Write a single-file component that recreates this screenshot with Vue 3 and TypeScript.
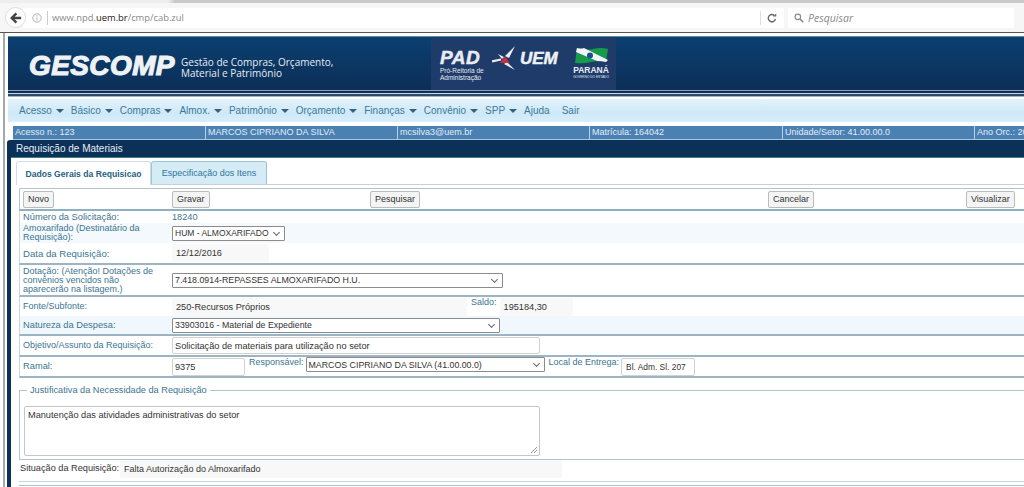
<script setup lang="ts">
const menus = [
  { label: 'Acesso', caret: true },
  { label: 'Básico', caret: true },
  { label: 'Compras', caret: true },
  { label: 'Almox.', caret: true },
  { label: 'Patrimônio', caret: true },
  { label: 'Orçamento', caret: true },
  { label: 'Finanças', caret: true },
  { label: 'Convênio', caret: true },
  { label: 'SPP', caret: true },
  { label: 'Ajuda', caret: false },
  { label: 'Sair', caret: false }
]

const infoCells = [
  { text: 'Acesso n.: 123', width: 193 },
  { text: 'MARCOS CIPRIANO DA SILVA', width: 192 },
  { text: 'mcsilva3@uem.br', width: 192 },
  { text: 'Matrícula: 164042', width: 193 },
  { text: 'Unidade/Setor: 41.00.00.0', width: 192 },
  { text: 'Ano Orc.: 2016', width: 60 }
]

const actions = ['Novo', 'Gravar', 'Pesquisar', 'Cancelar', 'Visualizar']
</script>

<template>
  <div class="page">
    <div class="browser">
      <div class="tabstrip"></div>
      <div class="navbar">
        <div class="back">
          <svg width="12" height="12" viewBox="0 0 14 14">
            <path d="M7.500 1.500 2 7l5.500 5.500M2.500 7H13" fill="none" stroke="#444" stroke-width="2.800" />
          </svg>
        </div>
        <div class="urlbar">
          <svg class="info-icon" width="10" height="10" viewBox="0 0 11 11">
            <circle cx="5.500" cy="5.500" r="4.600" fill="none" stroke="#aaa" />
            <path d="M5.500 4.800v3.400M5.500 2.600v1.200" stroke="#aaa" />
          </svg>
          <span class="url-sep"></span>
          <span class="url">www.npd.<b>uem.br</b>/cmp/cab.zul</span>
          <span class="reload-sep"></span>
          <svg class="reload" width="10" height="10" viewBox="0 0 11 11">
            <path d="M9.300 6.500A4 4 0 1 1 8 2.600" fill="none" stroke="#666" stroke-width="1.500" />
            <path d="M6.600 3.900h3.600V.6z" fill="#666" />
          </svg>
        </div>
        <div class="searchbar">
          <svg width="10" height="10" viewBox="0 0 13 13">
            <circle cx="5" cy="5" r="3.600" fill="none" stroke="#888" stroke-width="1.500" />
            <path d="m8 8 4 4" stroke="#888" stroke-width="2" />
          </svg>
          <span>Pesquisar</span>
        </div>
      </div>
    </div>

    <div class="viewport">
      <header class="banner">
        <div class="brand">GESCOMP</div>
        <div class="tagline">Gestão de Compras, Orçamento,<br />Material e Patrimônio</div>
        <div class="partners">
          <div class="pad">
            <div class="pad-name">PAD</div>
            <div class="pad-sub">Pró-Reitoria de<br />Administração</div>
          </div>
          <div class="uem">
            <svg width="25" height="26" viewBox="0 0 25 26">
              <path d="M0 15.500 9 13.500" stroke="#e8eef4" stroke-width="2.200" fill="none" />
              <path d="M13 10 23 0 17 12zM15 16l8 8-11-6zM6 8l6 3-2 2z" fill="#e8eef4" />
              <path d="M8 17 13 10l4.500 7z" fill="#c8303c" />
            </svg>
            <span>UEM</span>
          </div>
          <div class="parana">
            <svg width="33" height="17" viewBox="0 0 33 17">
              <path d="M2 1 Q10 4 18 2 T33 2 L31 15 Q24 13 16 15 T0 16z" fill="#169a4b" />
              <path d="M2 1 Q6 2 9 1 L33 13 L31 15 Q27 14 22 14 L1 5z" fill="#f2f4f6" />
              <circle cx="15" cy="8.500" r="3" fill="#1c4f8e" />
            </svg>
            <div class="parana-name">PARANÁ</div>
            <div class="parana-sub">GOVERNO DO ESTADO</div>
          </div>
        </div>
      </header>
      <div class="stripes"></div>

      <nav class="menu">
        <span v-for="item in menus" :key="item.label" class="menu-item">
          {{ item.label }}<i v-if="item.caret" class="caret"></i>
        </span>
      </nav>

      <div class="info-bar">
        <span
          v-for="cell in infoCells"
          :key="cell.text"
          class="info-cell"
          :style="{ width: cell.width + 'px' }"
        >{{ cell.text }}</span>
      </div>

      <section class="window">
        <div class="window-title">Requisição de Materiais</div>
        <div class="window-body">
          <div class="tabs">
            <div class="tab active">Dados Gerais da Requisicao</div>
            <div class="tab second">Especificação dos Itens</div>
          </div>

          <div class="form">
            <div class="toolbar">
              <div v-for="a in actions" :key="a"><button class="btn">{{ a }}</button></div>
            </div>

            <div class="group">
              <div class="row r-num">
                <label>Número da Solicitação:</label>
                <span class="value">18240</span>
              </div>
              <div class="row r-almox">
                <label class="tight">Amoxarifado (Destinatário da Requisição):</label>
                <div class="select almox">HUM - ALMOXARIFADO</div>
              </div>
              <div class="row r-data">
                <label>Data da Requisição:</label>
                <div class="readonly data">12/12/2016</div>
              </div>
            </div>

            <div class="group">
              <div class="row r-dot">
                <label class="tight dot-label">Dotação: (Atenção! Dotações de convênios vencidos não aparecerão na listagem.)</label>
                <div class="select dotacao">7.418.0914-REPASSES ALMOXARIFADO H.U.</div>
              </div>
            </div>

            <div class="group">
              <div class="row r-fonte">
                <label class="tight">Fonte/Subfonte:</label>
                <div class="readonly fonte">250-Recursos Próprios</div>
                <label class="inline saldo-label">Saldo:</label>
                <div class="readonly saldo">195184,30</div>
              </div>
              <div class="row r-nat">
                <label>Natureza da Despesa:</label>
                <div class="select natureza">33903016 - Material de Expediente</div>
              </div>
            </div>

            <div class="group">
              <div class="row r-obj">
                <label class="tight">Objetivo/Assunto da Requisição:</label>
                <div class="input objetivo">Solicitação de materiais para utilização no setor</div>
              </div>
            </div>

            <div class="group">
              <div class="row r-ramal">
                <label>Ramal:</label>
                <div class="input ramal">9375</div>
                <label class="inline resp-label">Responsável:</label>
                <div class="select responsavel">MARCOS CIPRIANO DA SILVA (41.00.00.0)</div>
                <label class="inline local-label">Local de Entrega:</label>
                <div class="input local">Bl. Adm. Sl. 207</div>
              </div>
            </div>

            <fieldset class="just">
              <legend>Justificativa da Necessidade da Requisição</legend>
              <div class="textarea">
                Manutenção das atividades administrativas do setor
                <svg class="grip" width="8" height="8" viewBox="0 0 8 8">
                  <path d="M7 1 1 7M7 4 4 7" stroke="#999" fill="none" />
                </svg>
              </div>
            </fieldset>

            <div class="situacao">
              <span class="sit-label">Situação da Requisição:</span>
              <div class="readonly sit">Falta Autorização do Almoxarifado</div>
            </div>
            <div class="end-line"></div>
          </div>
        </div>
      </section>
    </div>
  </div>
</template>

<style>
html,
body {
  margin: 0;
  overflow: hidden;
  background: #fff;
}
</style>

<style scoped>
.page {
  width: 1024px;
  height: 487px;
  overflow: hidden;
  font-family: "Liberation Sans", Arial, sans-serif;
  font-size: 10px;
  color: #333;
  background: #fff;
}

/* browser chrome */
.browser {
  height: 33px;
  background: #f6f6f6;
  border-bottom: 1px solid #555;
  box-sizing: border-box;
}

.tabstrip {
  height: 3px;
  background: linear-gradient(90deg, #eee 0, #eee 168px, #c9c9c9 175px, #c9c9c9 100%);
}

.navbar {
  display: flex;
  align-items: center;
  height: 29px;
  padding-left: 5px;
}

.back {
  display: flex;
  align-items: center;
  justify-content: center;
  box-sizing: border-box;
  flex: none;
  width: 21px;
  height: 21px;
  border: 1px solid #ddd;
  border-radius: 50%;
  background: #fff;
  z-index: 1;
}

.urlbar {
  display: flex;
  align-items: center;
  flex: none;
  width: 761px;
  height: 20px;
  margin-left: -3px;
  padding-left: 9px;
  box-sizing: border-box;
  background: #fff;
}

.url-sep {
  width: 1px;
  height: 14px;
  margin: 0 4px 0 5px;
  background: #ccc;
}

.url {
  flex: 1;
  font-family: "Open Sans", sans-serif;
  font-size: 9.400px;
  color: #8a8a8a;
}

.url b {
  font-weight: 400;
  color: #222;
}

.reload-sep {
  width: 1px;
  height: 14px;
  background: #ddd;
}

.reload {
  margin: 0 7px 0 6px;
}

.searchbar {
  display: flex;
  align-items: center;
  gap: 4px;
  flex: none;
  width: 226px;
  height: 20px;
  margin-left: 4px;
  padding-left: 6px;
  box-sizing: border-box;
  background: #fff;
  font-family: "Open Sans", sans-serif;
  font-size: 10.500px;
  font-style: italic;
  color: #888;
}

/* page in the window */
.viewport {
  height: 454px;
  margin-left: 3px;
  padding: 3px 0 0 3px;
  border-left: 2px solid #a5a9ab;
  box-sizing: border-box;
  overflow: hidden;
}

.banner {
  display: flex;
  align-items: center;
  position: relative;
  height: 54px;
  padding-top: 4px;
  border-top: 1px solid #5e8ca3;
  box-sizing: border-box;
  background: linear-gradient(180deg, #0b3f70, #0c2f57);
}

.brand {
  flex: none;
  margin-left: 21px;
  width: 152px;
  font-weight: 700;
  font-style: italic;
  font-size: 28px;
  letter-spacing: 0.400px;
  color: #eef2f6;
  -webkit-text-stroke: 1.200px #eef2f6;
  white-space: nowrap;
}

.tagline {
  margin-top: 4px;
  font-family: "Open Sans", sans-serif;
  font-size: 10px;
  line-height: 11px;
  color: #e6ecf2;
  white-space: nowrap;
}

.partners {
  position: absolute;
  left: 423px;
  top: 1px;
  width: 185px;
  height: 52px;
  display: flex;
  background: #1f3b69;
}

.pad {
  flex: none;
  margin: 12px 0 0 9px;
  width: 52px;
  color: #e8edf3;
}

.pad-name {
  font-weight: 700;
  font-style: italic;
  font-size: 19px;
  line-height: 15px;
  letter-spacing: 0.500px;
  -webkit-text-stroke: 0.500px #e8edf3;
}

.pad-sub {
  margin-top: 2px;
  font-size: 6.500px;
  line-height: 7px;
  white-space: nowrap;
}

.uem {
  display: flex;
  align-items: center;
  height: 26px;
  margin-top: 8px;
  color: #eef2f6;
}

.uem svg {
  flex: none;
}

.uem span {
  margin-left: 3px;
  font-weight: 700;
  font-style: italic;
  font-size: 17px;
  -webkit-text-stroke: 0.500px #eef2f6;
}

.parana {
  position: absolute;
  left: 142px;
  top: 9px;
  width: 36px;
  text-align: center;
  color: #e8edf3;
}

.parana svg {
  display: block;
  margin: 0 auto;
}

.parana-name {
  margin-top: 2px;
  font-weight: 700;
  font-size: 8.500px;
  line-height: 9px;
  white-space: nowrap;
}

.parana-sub {
  font-size: 3.200px;
  line-height: 4px;
  white-space: nowrap;
}

.stripes {
  height: 7px;
  background: linear-gradient(
    180deg,
    #8aa0b4 0,
    #8aa0b4 1px,
    #0d2f55 1px,
    #0d2f55 3px,
    #cfd9e2 3px,
    #cfd9e2 4px,
    #2c4b6c 4px,
    #2c4b6c 6px,
    #9fb4c6 6px,
    #9fb4c6 7px
  );
}

.menu {
  display: flex;
  align-items: center;
  gap: 7px;
  height: 23px;
  margin: 2px 0 4px;
  padding-left: 11px;
  box-sizing: border-box;
  background: linear-gradient(180deg, #e3f3fc, #cfe8f7 60%, #d8eefa);
  font-size: 10px;
  color: #3a7a9e;
}

.menu-item {
  display: inline-flex;
  align-items: center;
  white-space: nowrap;
}

.menu-item:nth-child(11) {
  margin-left: 5px;
}

.caret {
  width: 0;
  height: 0;
  margin: 1px 0 0 4px;
  border-left: 4px solid transparent;
  border-right: 4px solid transparent;
  border-top: 4px solid #36607e;
}

.info-bar {
  display: flex;
  height: 14px;
  margin-left: 5px;
  background: #4a80b2;
  border-bottom: 1px solid #a9c6dc;
  box-sizing: border-box;
  color: #e3edf5;
  font-size: 9px;
  line-height: 13px;
  white-space: nowrap;
}

.info-cell {
  flex: none;
  box-sizing: border-box;
  padding-left: 2px;
  border-right: 1px solid #b8d0e2;
}

.info-cell:last-child {
  border-right: 0;
}

.window {
  margin-left: -1px;
  height: 347px;
  background: #0b3158;
  border-radius: 3px 0 0 0;
}

.window-title {
  height: 17px;
  padding-left: 9px;
  line-height: 18px;
  color: #e8eef4;
  font-size: 10px;
}

.window-body {
  height: 330px;
  margin-left: 4px;
  padding: 3px 0 0 5px;
  background: #fff;
  border-top: 1px solid #3e7f93;
  box-sizing: border-box;
}

.tabs {
  display: flex;
  height: 24px;
  border-bottom: 1px solid #c5d2d9;
  box-sizing: border-box;
}

.tab {
  display: flex;
  align-items: center;
  justify-content: center;
  height: 23px;
  border: 1px solid #9cc4d8;
  border-bottom: 0;
  border-radius: 3px 3px 0 0;
  background: #d5ecf7;
  color: #2f7597;
  font-size: 9px;
  box-sizing: border-box;
  white-space: nowrap;
}

.tab.active {
  width: 135px;
  height: 24px;
  background: #fff;
  border-color: #d2dde3;
  font-size: 8.600px;
  font-weight: 700;
  color: #2a5f7f;
  z-index: 1;
}

.tab.second {
  width: 116px;
}

.form {
  margin: 3px 0 0 3px;
  width: 1005px;
  color: #3c7591;
}

.toolbar {
  display: grid;
  grid-template-columns: 149px 198px 398px 198px auto;
  align-items: center;
  height: 23px;
  padding-left: 3px;
  border: 1px solid #b5c4cc;
  border-width: 1px 0 2px 1px;
  border-bottom-color: #8fb0bf;
  box-sizing: border-box;
}

.btn {
  display: block;
  height: 17px;
  padding: 0 4px;
  border: 1px solid #bbb;
  border-radius: 2px;
  background: #f4f4f4;
  font-family: inherit;
  font-size: 9px;
  color: #333;
}

.group {
  border-left: 1px solid #c5d8e2;
  border-bottom: 2px solid #9db4c2;
  box-sizing: border-box;
}

.row {
  display: flex;
  align-items: center;
  padding-left: 3px;
}

label {
  display: block;
  flex: none;
  width: 149px;
  font-size: 9.300px;
  line-height: 9px;
}

label.tight {
  padding-right: 10px;
  box-sizing: border-box;
  font-size: 9px;
}

label.inline {
  width: auto;
  margin-top: -8px;
  font-size: 9px;
}

.value {
  font-size: 9.200px;
}

.select,
.input,
.readonly {
  display: flex;
  align-items: center;
  flex: none;
  box-sizing: border-box;
  color: #333;
  font-size: 9.200px;
  white-space: nowrap;
}

.select {
  position: relative;
  height: 15px;
  padding-left: 2px;
  border: 1px solid #8b8b8b;
  border-radius: 1px;
  background: #fff;
  font-size: 8.800px;
}

.select::after {
  content: "";
  position: absolute;
  right: 5px;
  top: 3px;
  width: 4px;
  height: 4px;
  border-right: 1px solid #666;
  border-bottom: 1px solid #666;
  transform: rotate(45deg);
}

.input {
  height: 18px;
  padding-left: 2px;
  border: 1px solid #d2d2d2;
  border-radius: 2px;
  background: #fff;
}

.readonly {
  height: 18px;
  padding-left: 4px;
  background: #f8f8f8;
  border-radius: 2px;
}

.r-num {
  height: 12px;
}

.r-almox {
  height: 20px;
  background: #f3f9fd;
}

.almox {
  width: 113px;
  font-size: 8.500px;
}

.r-data {
  height: 20px;
}

.r-data label {
  font-size: 9.600px;
}

.data {
  width: 97px;
}

.r-dot {
  height: 30px;
}

.dot-label {
  line-height: 9px;
}

.dotacao {
  width: 331px;
}

.r-fonte {
  height: 19px;
}

.fonte {
  width: 295px;
}

.saldo-label {
  margin-left: 4px;
}

.saldo {
  width: 73px;
  margin-left: 3px;
}

.r-nat {
  height: 18px;
  background: #f0f8fd;
}

.natureza {
  width: 328px;
}

.r-obj {
  height: 19px;
}

.objetivo {
  width: 368px;
  height: 17px;
}

.r-ramal {
  height: 19px;
}

.ramal {
  width: 73px;
}

.resp-label {
  margin-left: 4px;
}

.responsavel {
  width: 239px;
  margin: -4px 0 0 2px;
}

.local-label {
  margin-left: 4px;
}

.local {
  width: 74px;
  margin-left: 2px;
  padding-left: 4px;
  font-size: 8.400px;
}

.just {
  height: 76px;
  min-width: 0;
  margin: 6px 0 0;
  padding: 10px 0 0 4px;
  box-sizing: border-box;
  border: 1px solid #b4c4ce;
  border-right: 0;
}

.just legend {
  margin-left: 3px;
  padding: 0 3px;
  font-size: 9.200px;
  line-height: 12px;
  color: #3c7591;
}

.textarea {
  position: relative;
  width: 516px;
  height: 50px;
  padding: 3px;
  box-sizing: border-box;
  border: 1px solid #c6c6c6;
  border-radius: 2px;
  color: #333;
  font-size: 9.200px;
}

.grip {
  position: absolute;
  right: 1px;
  bottom: 1px;
}

.situacao {
  display: flex;
  align-items: flex-start;
  height: 22px;
  padding-left: 1px;
  border-bottom: 1px solid #c8d4da;
  box-sizing: border-box;
}

.sit-label {
  flex: none;
  width: 100px;
  margin-top: 3px;
  color: #333;
  font-size: 9.200px;
  white-space: nowrap;
}

.sit {
  width: 442px;
  font-size: 9px;
}

.end-line {
  height: 1px;
  margin-top: 3px;
  background: #a9c3d2;
}
</style>
